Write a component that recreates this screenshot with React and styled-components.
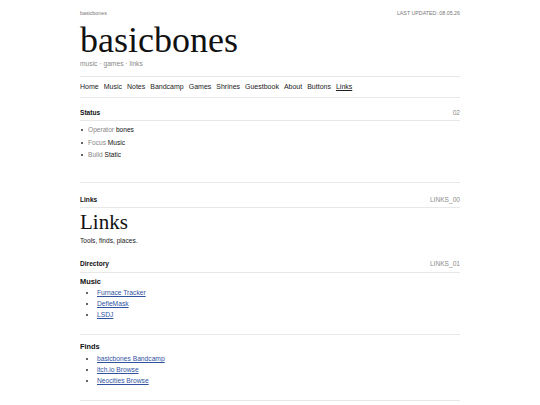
import React from 'react';
import styled, { createGlobalStyle } from 'styled-components';

const GlobalStyle = createGlobalStyle`
	body {
		margin: 0;
		background: #fff;
		color: #222;
		font-family: "Liberation Sans", Arial, sans-serif;
	}
`;

const Page = styled.div`
	width: 380px;
	margin: 0 auto;
	padding-top: 9px;
`;

const TopBar = styled.div`
	display: flex;
	justify-content: space-between;
	font-size: 5.3px;
	line-height: 8px;
	color: #777;
	span:last-child {
		text-transform: uppercase;
	}
`;

const Title = styled.h1`
	margin: 5px 0 0;
	font-family: "Liberation Serif", "Times New Roman", serif;
	font-weight: normal;
	font-size: 36px;
	line-height: 36px;
	color: #111;
`;

const Tagline = styled.div`
	margin-top: 2px;
	font-size: 6.7px;
	line-height: 8px;
	color: #888;
`;

const Nav = styled.nav`
	display: flex;
	gap: 5px;
	margin-top: 8px;
	padding: 6px 0;
	border-top: 1px solid #e8e8e8;
	border-bottom: 1px solid #e8e8e8;
	font-size: 7px;
	line-height: 8px;
	a {
		color: #222;
		text-decoration: none;
	}
	a.active {
		text-decoration: underline;
	}
`;

const Section = styled.section`
	margin-top: ${props => props.$top || 0}px;
	padding-top: ${props => props.$padTop || 0}px;
	padding-bottom: ${props => props.$bottom || 0}px;
	border-bottom: ${props => (props.$ruled ? '1px solid #e8e8e8' : 'none')};
`;

const SectionHead = styled.div`
	display: flex;
	justify-content: space-between;
	padding-bottom: ${props => props.$pad || 3}px;
	border-bottom: 1px solid #e8e8e8;
	font-size: 6.6px;
	line-height: 8px;
	strong {
		font-weight: bold;
		color: #111;
	}
	span {
		color: #8a8a8a;
	}
`;

const StatusList = styled.ul`
	list-style: none;
	margin: 0;
	padding: 3px 0 0;
	font-size: 6.6px;
	line-height: 12.5px;
	li {
		display: flex;
		align-items: center;
		gap: 3px;
		color: #888;
	}
	li::before {
		content: '';
		width: 2px;
		height: 2px;
		margin: 0 2px 0 1px;
		background: #666;
	}
	b {
		font-weight: normal;
		color: #111;
	}
`;

const PageTitle = styled.h2`
	margin: 4.4px 0 0;
	font-family: "Liberation Serif", "Times New Roman", serif;
	font-weight: normal;
	font-size: 21px;
	line-height: 21px;
	color: #111;
`;

const Lead = styled.p`
	margin: 3.6px 0 15px;
	font-size: 6.6px;
	line-height: 8px;
	color: #222;
`;

const Group = styled.div`
	padding-top: ${props => props.$top}px;
	padding-bottom: 13.5px;
	border-bottom: 1px solid #e8e8e8;
`;

const GroupTitle = styled.h3`
	margin: 0;
	font-size: 7.4px;
	line-height: 9px;
	font-weight: bold;
	color: #111;
`;

const LinkList = styled.ul`
	margin: ${props => props.$gap}px 0 0;
	padding-left: 17px;
	font-size: 6.7px;
	line-height: 11px;
	li::marker {
		color: #333;
	}
	a {
		color: #30539f;
		text-decoration: underline;
	}
`;

const navItems = ['Home', 'Music', 'Notes', 'Bandcamp', 'Games', 'Shrines', 'Guestbook', 'About', 'Buttons', 'Links'];

const status = [
	['Operator', 'bones'],
	['Focus', 'Music'],
	['Build', 'Static']
];

const groups = [
	{ name: 'Music', top: 4, gap: 1.5, links: ['Furnace Tracker', 'DefleMask', 'LSDJ'] },
	{ name: 'Finds', top: 7.5, gap: 2, links: ['basicbones Bandcamp', 'itch.io Browse', 'Neocities Browse'] }
];

export default function App() {
	return (
		<>
			<GlobalStyle />
			<Page>
				<TopBar>
					<span>basicbones</span>
					<span>Last updated: 08.05.26</span>
				</TopBar>
				<Title>basicbones</Title>
				<Tagline>music · games · links</Tagline>
				<Nav>
					{navItems.map(item => (
						<a key={item} href="#" className={item === 'Links' ? 'active' : ''}>
							{item}
						</a>
					))}
				</Nav>

				<Section $top={11} $bottom={20.5} $ruled>
					<SectionHead>
						<strong>Status</strong>
						<span>02</span>
					</SectionHead>
					<StatusList>
						{status.map(([label, value]) => (
							<li key={label}>
								<span>
									{label} <b>{value}</b>
								</span>
							</li>
						))}
					</StatusList>
				</Section>

				<Section $padTop={13}>
					<SectionHead>
						<strong>Links</strong>
						<span>LINKS_00</span>
					</SectionHead>
					<PageTitle>Links</PageTitle>
					<Lead>Tools, finds, places.</Lead>
					<SectionHead $pad={4}>
						<strong>Directory</strong>
						<span>LINKS_01</span>
					</SectionHead>
					{groups.map(group => (
						<Group key={group.name} $top={group.top}>
							<GroupTitle>{group.name}</GroupTitle>
							<LinkList $gap={group.gap}>
								{group.links.map(link => (
									<li key={link}>
										<a href="#">{link}</a>
									</li>
								))}
							</LinkList>
						</Group>
					))}
				</Section>
			</Page>
		</>
	);
}
